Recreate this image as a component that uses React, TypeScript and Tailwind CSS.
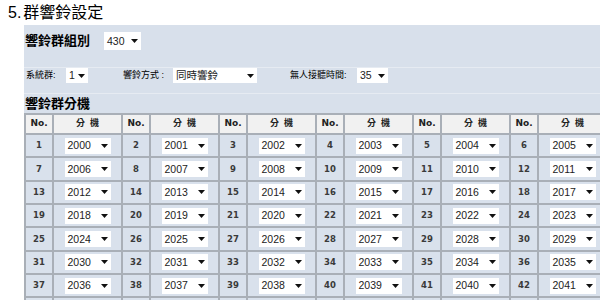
import React from 'react';

const cjk = '"Liberation Sans", "Noto Sans CJK TC", sans-serif';

function Arrow() {
  return (
    <svg width="7" height="4" viewBox="0 0 7 4" className="shrink-0">
      <polygon points="0,0 7,0 3.5,4" fill="#111" />
    </svg>
  );
}

function FakeSelect({ value, className }: { value: string; className: string }) {
  return (
    <div className={`flex items-center justify-between bg-white pl-[3px] pr-[3px] text-[10.5px] leading-none text-[#222] ${className}`}>
      <span>{value}</span>
      <Arrow />
    </div>
  );
}

const rows = Array.from({ length: 7 }, (_, r) =>
  Array.from({ length: 6 }, (_, c) => {
    const n = r * 6 + c + 1;
    return { no: n, ext: String(1999 + n) };
  })
);

export default function App() {
  return (
    <div className="w-[600px] h-[300px] overflow-hidden bg-white text-black" style={{ fontFamily: cjk }}>
      <div className="h-[25px] pt-[4px] pl-[8px] text-[16px] leading-[18px]">
        5.<span className="ml-[2px]">群響鈴設定</span>
      </div>

      <div className="ml-[24px] w-[576px] bg-[#d8e0eb]">
        <div className="h-[43px] pt-[7px] flex items-start border-b border-[#e6ebf2]">
          <div className="w-[80px] pl-[1px] h-[18px] flex items-center text-[13px] font-bold">響鈴群組別</div>
          <FakeSelect value="430" className="w-[37px] h-[18px]" />
        </div>

        <div className="h-[26px] flex items-start border-b border-[#e6ebf2] text-[9px]">
          <div className="w-[42px] pl-[2px] h-[15px] flex items-center">系統群:</div>
          <FakeSelect value="1" className="w-[22px] h-[15px]" />
          <div className="ml-[35px] w-[50px] h-[15px] flex items-center">響鈴方式 :</div>
          <FakeSelect value="同時響鈴" className="w-[84px] h-[15px]" />
          <div className="ml-[33px] w-[67px] h-[15px] flex items-center">無人接聽時間:</div>
          <FakeSelect value="35" className="w-[31px] h-[15px]" />
        </div>

        <div className="h-[19px] flex items-center pl-[1px] text-[13px] font-bold">響鈴群分機</div>

        <div className="grid grid-cols-[repeat(6,26px_67px)] grid-rows-[18px_repeat(8,21.33px)] gap-[2px] p-[2px] pr-0 bg-[#a9afb7] w-max">
          {Array.from({ length: 6 }).map((_, i) => (
            <React.Fragment key={`h${i}`}>
              <div className="bg-[#f1f1f1] flex items-center justify-center text-[9px] font-bold text-[#222]" style={{ fontFamily: '"DejaVu Sans", sans-serif' }}>
                No.
              </div>
              <div className="bg-[#f1f1f1] flex items-center justify-center text-[9px] font-bold text-[#222]">
                分&nbsp;&nbsp;機
              </div>
            </React.Fragment>
          ))}
          {rows.map((row, r) =>
            row.map((cell) => (
              <React.Fragment key={`${r}-${cell.no}`}>
                <div className="bg-[#d9e1ec] flex items-center justify-center text-[8.5px] font-bold text-[#3a3a3a]" style={{ fontFamily: '"DejaVu Sans", sans-serif' }}>
                  {cell.no}
                </div>
                <div className="bg-[#d9e1ec] flex items-center justify-center">
                  <FakeSelect value={cell.ext} className="w-[46px] h-[16px]" />
                </div>
              </React.Fragment>
            ))
          )}
          {Array.from({ length: 12 }).map((_, i) => (
            <div key={`e${i}`} className="bg-[#d9e1ec]" />
          ))}
        </div>
      </div>
    </div>
  );
}
